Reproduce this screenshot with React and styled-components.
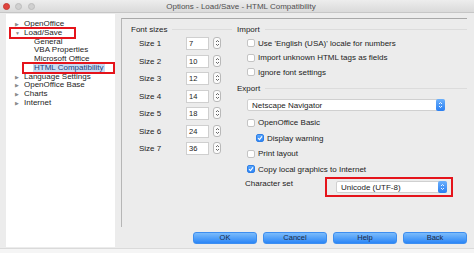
import React from 'react';
import styled, { createGlobalStyle, css } from 'styled-components';

const GlobalStyle = createGlobalStyle`
  html, body {
    margin: 0;
    padding: 0;
    background: #f4f4f4;
  }
  body {
    font-family: "Liberation Sans", Arial, sans-serif;
    font-size: 8px;
    color: #222;
  }
`;

const Window = styled.div`
  width: 474px;
  height: 253px;
  display: flex;
  flex-direction: column;
  background: #ececec;
  overflow: hidden;
`;

const TitleBar = styled.div`
  height: 12px;
  flex: none;
  display: flex;
  align-items: center;
  gap: 5.5px;
  padding-left: 2.5px;
  background: linear-gradient(#ededed, #dadada);
  border-bottom: 1px solid #c6c6c6;
`;

const Light = styled.span`
  width: 7px;
  height: 7px;
  flex: none;
  border-radius: 50%;
  background: ${(p) => (p.$red ? '#e0443e' : '#d0d0d0')};
  border: 0.5px solid ${(p) => (p.$red ? '#c63a33' : '#bdbdbd')};
  box-sizing: border-box;
`;

const Title = styled.div`
  flex: 1;
  text-align: center;
  color: #4f4f4f;
  font-size: 8px;
  margin-right: 32px;
`;

const Body = styled.div`
  display: flex;
  padding: 1px 7px 0 6px;
  height: 234px;
  flex: none;
`;

const Tree = styled.div`
  width: 109px;
  height: 233px;
  background: #fff;
  padding-top: 6px;
  box-sizing: border-box;
`;

const TreeRow = styled.div`
  position: relative;
  height: 8.75px;
  line-height: 8.75px;
  display: flex;
  align-items: center;
  padding-left: ${(p) => (p.$child ? 27 : 9)}px;
  color: #1c1c1c;
  white-space: nowrap;
  ${(p) =>
    p.$marked &&
    css`
      &::after {
        content: '';
        position: absolute;
        left: ${p.$markLeft}px;
        width: ${p.$markWidth}px;
        top: -1.5px;
        bottom: -1.5px;
        border: 2px solid #e5141b;
        pointer-events: none;
      }
    `}
`;

const Arrow = styled.span`
  width: 8px;
  font-size: 5px;
  color: #8a8a8a;
  flex: none;
`;

const RowLabel = styled.span`
  padding: 0 1px;
  ${(p) =>
    p.$selected &&
    css`
      background: #c9ddf4;
      color: #1f3f7a;
    `}
`;

const RightColumn = styled.div`
  margin-left: 6px;
  width: 346px;
  display: flex;
  flex-direction: column;
`;

const Frame = styled.div`
  margin-top: 4px;
  height: 209px;
  border-top: 1px solid #a8a8a8;
  border-left: 1px solid #b6b6b6;
  display: flex;
  padding-left: 9px;
  box-sizing: border-box;
`;

const FontColumn = styled.div`
  width: 101px;
  padding-top: 5px;
`;

const OptionsColumn = styled.div`
  flex: 1;
  margin-left: 5px;
  padding-top: 5px;
`;

const Header = styled.div`
  display: flex;
  align-items: center;
  height: 10px;
  color: #222;
  margin-top: ${(p) => p.$top || 0}px;

  &::after {
    content: '';
    flex: 1;
    height: 1px;
    margin-left: 5px;
    background: #dcdcdc;
  }
`;

const SizeList = styled.div`
  padding-top: 3px;
  display: flex;
  flex-direction: column;
`;

const SizeRow = styled.div`
  height: 17.5px;
  display: flex;
  align-items: flex-start;
  padding-left: 8px;
`;

const SizeLabel = styled.span`
  width: 47px;
  line-height: 13px;
`;

const NumberField = styled.div`
  width: 23px;
  height: 13px;
  background: #fff;
  border: 1px solid #cfcfcf;
  box-sizing: border-box;
  line-height: 11px;
  padding-left: 2px;
  font-size: 7.5px;
`;

const Spinner = styled.div`
  margin-left: 4px;
  width: 8px;
  height: 12px;
  border: 1px solid #b9b9b9;
  border-radius: 3px;
  box-sizing: border-box;
  background: #fbfbfb;
  display: flex;
  align-items: center;
  justify-content: center;
`;

const CheckList = styled.div`
  display: flex;
  flex-direction: column;
  padding-top: ${(p) => p.$top || 0}px;
`;

const CheckRow = styled.label`
  height: ${(p) => p.$h}px;
  display: flex;
  align-items: center;
  padding-left: ${(p) => (p.$indent ? 19 : 10)}px;
  gap: 3px;
`;

const Box = styled.span`
  width: 8px;
  height: 8px;
  box-sizing: border-box;
  border-radius: 2px;
  flex: none;
  display: flex;
  align-items: center;
  justify-content: center;
  ${(p) =>
    p.$checked
      ? css`
          background: linear-gradient(#5aa6fb, #2f86f6);
          border: 1px solid #2f7fe6;
        `
      : css`
          background: #fff;
          border: 1px solid #c4c4c4;
        `}
`;

const Select = styled.div`
  width: ${(p) => p.$w}px;
  height: 12px;
  background: #fff;
  border: 1px solid #d0d0d0;
  border-radius: 2px;
  box-sizing: border-box;
  display: flex;
  align-items: center;
  justify-content: space-between;
  padding-left: 4px;
`;

const SelectStep = styled.span`
  width: 9px;
  height: 12px;
  margin-right: -1px;
  border-radius: 2px;
  background: linear-gradient(#6bb0fc, #2a7ff2);
  display: flex;
  align-items: center;
  justify-content: center;
`;

const ExportSelectRow = styled.div`
  padding: 6px 0 4px 10px;
`;

const CharsetRow = styled.div`
  display: flex;
  align-items: flex-start;
  padding-left: 8px;
`;

const CharsetLabel = styled.span`
  width: 80px;
  line-height: 12px;
  margin-top: 1px;
`;

const Marked = styled.div`
  border: 2px solid #e5141b;
  padding: 2px 4px 2px 9px;
`;

const ButtonRow = styled.div`
  display: flex;
  justify-content: flex-end;
  gap: 6px;
  margin-top: 5px;
`;

const Button = styled.button`
  width: 64px;
  height: 12px;
  padding: 0;
  border: 1px solid #3d8ef0;
  border-radius: 3px;
  background: linear-gradient(#7cbcfb, #2b86f7);
  color: #1d2a44;
  font-family: inherit;
  font-size: 7.5px;
  line-height: 10px;
`;

const BottomStrip = styled.div`
  flex: 1;
  border-top: 1px solid #dadada;
  background: #f5f5f5;
`;

function Chevrons({ color }) {
  return (
    <svg width="5" height="8" viewBox="0 0 5 8">
      <path d="M1 3 L2.5 1.5 L4 3" fill="none" stroke={color} strokeWidth="0.9" />
      <path d="M1 5 L2.5 6.5 L4 5" fill="none" stroke={color} strokeWidth="0.9" />
    </svg>
  );
}

function Check() {
  return (
    <svg width="6" height="6" viewBox="0 0 6 6">
      <path d="M1 3.2 L2.5 4.6 L5 1.3" fill="none" stroke="#fff" strokeWidth="1.1" />
    </svg>
  );
}

const tree = [
  { label: 'OpenOffice' },
  { label: 'Load/Save', open: true, marked: [3, 63] },
  { label: 'General', child: true },
  { label: 'VBA Properties', child: true },
  { label: 'Microsoft Office', child: true },
  { label: 'HTML Compatibility', child: true, selected: true, marked: [16, 89] },
  { label: 'Language Settings' },
  { label: 'OpenOffice Base' },
  { label: 'Charts' },
  { label: 'Internet' },
];

const sizes = [7, 10, 12, 14, 18, 24, 36];

function CheckItem({ label, checked, indent, h = 14.5 }) {
  return (
    <CheckRow $indent={indent} $h={h}>
      <Box $checked={checked}>{checked && <Check />}</Box>
      <span>{label}</span>
    </CheckRow>
  );
}

export default function App() {
  return (
    <>
      <GlobalStyle />
      <Window>
        <TitleBar>
          <Light $red />
          <Light />
          <Light />
          <Title>Options - Load/Save - HTML Compatibility</Title>
        </TitleBar>
        <Body>
          <Tree>
            {tree.map((item) => (
              <TreeRow
                key={item.label}
                $child={item.child}
                $marked={!!item.marked}
                $markLeft={item.marked && item.marked[0]}
                $markWidth={item.marked && item.marked[1]}
              >
                {!item.child && <Arrow>{item.open ? '▼' : '▶'}</Arrow>}
                <RowLabel $selected={item.selected}>{item.label}</RowLabel>
              </TreeRow>
            ))}
          </Tree>
          <RightColumn>
            <Frame>
              <FontColumn>
                <Header>Font sizes</Header>
                <SizeList>
                  {sizes.map((s, i) => (
                    <SizeRow key={s}>
                      <SizeLabel>Size {i + 1}</SizeLabel>
                      <NumberField>{s}</NumberField>
                      <Spinner>
                        <Chevrons color="#555" />
                      </Spinner>
                    </SizeRow>
                  ))}
                </SizeList>
              </FontColumn>
              <OptionsColumn>
                <Header>Import</Header>
                <CheckList $top={2}>
                  <CheckItem label="Use 'English (USA)' locale for numbers" />
                  <CheckItem label="Import unknown HTML tags as fields" />
                  <CheckItem label="Ignore font settings" />
                </CheckList>
                <Header $top={3.5}>Export</Header>
                <ExportSelectRow>
                  <Select $w={198}>
                    <span>Netscape Navigator</span>
                    <SelectStep>
                      <Chevrons color="#fff" />
                    </SelectStep>
                  </Select>
                </ExportSelectRow>
                <CheckList>
                  <CheckItem label="OpenOffice Basic" h={15.5} />
                  <CheckItem label="Display warning" checked indent h={15.5} />
                  <CheckItem label="Print layout" h={15.5} />
                  <CheckItem label="Copy local graphics to Internet" checked h={15.5} />
                </CheckList>
                <CharsetRow>
                  <CharsetLabel>Character set</CharsetLabel>
                  <Marked>
                    <Select $w={111}>
                      <span>Unicode (UTF-8)</span>
                      <SelectStep>
                        <Chevrons color="#fff" />
                      </SelectStep>
                    </Select>
                  </Marked>
                </CharsetRow>
              </OptionsColumn>
            </Frame>
            <ButtonRow>
              <Button>OK</Button>
              <Button>Cancel</Button>
              <Button>Help</Button>
              <Button>Back</Button>
            </ButtonRow>
          </RightColumn>
        </Body>
        <BottomStrip />
      </Window>
    </>
  );
}
